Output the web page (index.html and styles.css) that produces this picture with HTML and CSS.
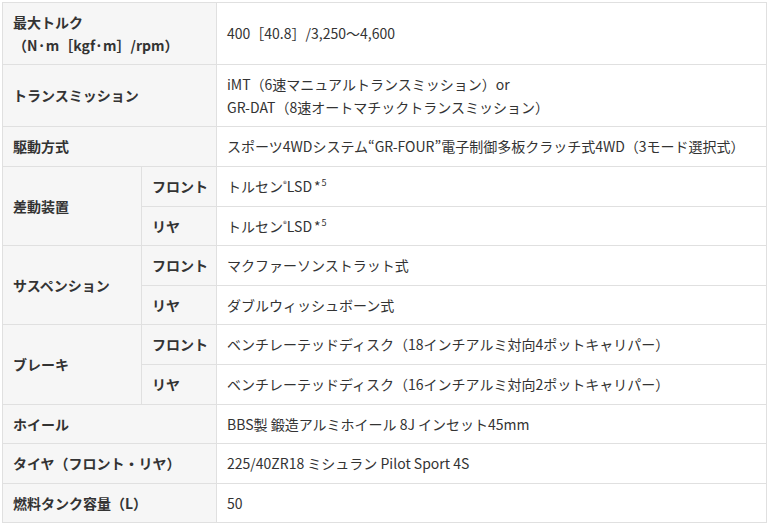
FILE: index.html
```html
<!DOCTYPE html>
<html lang="ja">
<head>
<meta charset="utf-8">
<title>主要諸元</title>
<link rel="stylesheet" href="styles.css">
</head>
<body>
<table class="spec">
  <colgroup>
    <col class="c1">
    <col class="c2">
    <col class="c3">
  </colgroup>
  <tbody>
    <tr>
      <th colspan="2">最大トルク<br>（N·m［kgf·m］/rpm）</th>
      <td>400［40.8］/3,250〜4,600</td>
    </tr>
    <tr>
      <th colspan="2">トランスミッション</th>
      <td>iMT（6速マニュアルトランスミッション）or<br>GR-DAT（8速オートマチックトランスミッション）</td>
    </tr>
    <tr>
      <th colspan="2">駆動方式</th>
      <td>スポーツ4WDシステム“GR-FOUR”電子制御多板クラッチ式4WD（3モード選択式）</td>
    </tr>
    <tr>
      <th rowspan="2">差動装置</th>
      <th class="sub">フロント</th>
      <td>トルセン<sup class="reg">®</sup>LSD<span class="note">*<sup>5</sup></span></td>
    </tr>
    <tr>
      <th class="sub">リヤ</th>
      <td>トルセン<sup class="reg">®</sup>LSD<span class="note">*<sup>5</sup></span></td>
    </tr>
    <tr>
      <th rowspan="2">サスペンション</th>
      <th class="sub">フロント</th>
      <td>マクファーソンストラット式</td>
    </tr>
    <tr>
      <th class="sub">リヤ</th>
      <td>ダブルウィッシュボーン式</td>
    </tr>
    <tr>
      <th rowspan="2">ブレーキ</th>
      <th class="sub">フロント</th>
      <td>ベンチレーテッドディスク（18インチアルミ対向4ポットキャリパー）</td>
    </tr>
    <tr>
      <th class="sub">リヤ</th>
      <td>ベンチレーテッドディスク（16インチアルミ対向2ポットキャリパー）</td>
    </tr>
    <tr>
      <th colspan="2">ホイール</th>
      <td>BBS製 鍛造アルミホイール 8J インセット45mm</td>
    </tr>
    <tr>
      <th colspan="2">タイヤ（フロント・リヤ）</th>
      <td>225/40ZR18 ミシュラン Pilot Sport 4S</td>
    </tr>
    <tr>
      <th colspan="2">燃料タンク容量（L）</th>
      <td>50</td>
    </tr>
  </tbody>
</table>
</body>
</html>
```
FILE: styles.css
```css
html, body {
  margin: 0;
  background: #fff;
}
body {
  padding: 2px 3px 0 2px;
  font-family: "Noto Sans CJK JP", "Noto Sans", sans-serif;
  font-size: 14px;
  color: #333;
}
.spec {
  width: 100%;
  border-collapse: collapse;
  table-layout: fixed;
}
.c1 { width: 139px; }
.c2 { width: 75px; }
.spec th,
.spec td {
  border: 1px solid #e0e0e0;
  padding: 8px 10px;
  line-height: 22.6px;
  text-align: left;
  vertical-align: middle;
}
.spec th {
  background: #f6f6f6;
  font-weight: 700;
}
.spec th.sub {
  padding-right: 2px;
  white-space: nowrap;
}
.spec td {
  background: #fff;
  font-weight: 400;
  padding-left: 10px;
}
.reg {
  font-size: 8px;
  vertical-align: 5px;
  line-height: 0;
}
.note {
  margin-left: 2px;
}
.note sup {
  font-size: 9px;
  vertical-align: 6px;
  line-height: 0;
  margin-left: 1px;
}
```
